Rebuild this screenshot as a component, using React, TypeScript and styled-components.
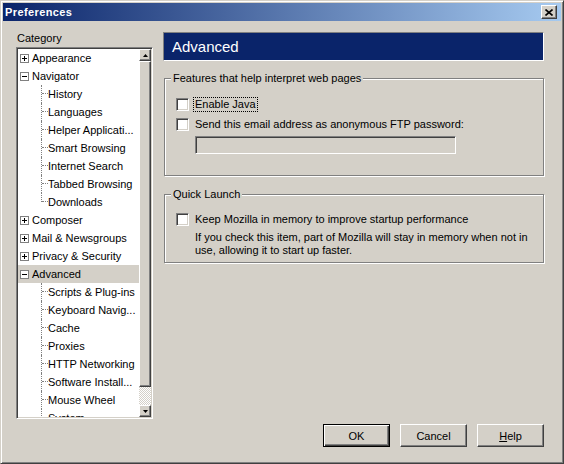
import React from 'react';
import styled, { createGlobalStyle } from 'styled-components';

const face = '#D4D0C8';

const GlobalStyle = createGlobalStyle`
  html, body { margin: 0; padding: 0; background: ${face}; }
  body {
    font-family: "Liberation Sans", Arial, sans-serif;
    font-size: 11px;
    color: #000;
  }
  * { box-sizing: border-box; }
`;

const Window = styled.div`
  width: 564px;
  height: 464px;
  display: flex;
  flex-direction: column;
  background: ${face};
  border: 1px solid;
  border-color: ${face} #404040 #404040 ${face};
  box-shadow: inset 1px 1px 0 #fff, inset -1px -1px 0 #808080;
  padding: 2px;
`;

const TitleBar = styled.div`
  height: 18px;
  display: flex;
  align-items: center;
  justify-content: space-between;
  padding: 0 4px 0 2px;
  background: linear-gradient(to right, #0a246a, #a6caf0);
`;

const Title = styled.span`
  color: #fff;
  font-weight: bold;
  font-size: 11px;
  letter-spacing: 0.4px;
`;

const Raised = `
  background: ${face};
  border: 1px solid;
  border-color: #fff #404040 #404040 #fff;
  box-shadow: inset -1px -1px 0 #808080;
`;

const CloseButton = styled.button`
  ${Raised}
  width: 16px;
  height: 14px;
  padding: 0;
  display: flex;
  align-items: center;
  justify-content: center;
`;

const Content = styled.div`
  display: flex;
  padding: 11px 17px 0 13px;
  gap: 10px;
`;

const LeftColumn = styled.div`
  width: 138px;
  display: flex;
  flex-direction: column;
`;

const Label = styled.div`
  line-height: 13px;
  padding-left: 1px;
  margin-bottom: 2px;
`;

const Sunken = `
  border: 1px solid;
  border-color: #808080 #fff #fff #808080;
  box-shadow: inset 1px 1px 0 #404040, inset -1px -1px 0 ${face};
`;

const TreeBox = styled.div`
  ${Sunken}
  height: 372px;
  padding: 1px;
  background: #fff;
  display: flex;
`;

const TreeList = styled.div`
  flex: 1;
  overflow: hidden;
`;

const Row = styled.div<{ $selected?: boolean }>`
  height: 18px;
  display: flex;
  align-items: center;
  white-space: nowrap;
  background: ${p => (p.$selected ? face : 'transparent')};
`;

const Expander = styled.svg`
  margin: 0 3px 0 2px;
  flex: none;
`;

const Connector = styled.span<{ $last?: boolean }>`
  align-self: flex-start;
  flex: none;
  margin-left: 23px;
  width: 7px;
  height: ${p => (p.$last ? 9 : 18)}px;
  border-left: 1px dotted #808080;
  &::after {
    content: '';
    display: block;
    margin-top: 8px;
    width: 6px;
    border-top: 1px dotted #808080;
  }
`;

const Scrollbar = styled.div`
  width: 12px;
  flex: none;
  display: flex;
  flex-direction: column;
`;

const ScrollButton = styled.div`
  ${Raised}
  height: 12px;
  display: flex;
  align-items: center;
  justify-content: center;
`;

const Thumb = styled.div`
  ${Raised}
  height: 326px;
`;

const Track = styled.div`
  flex: 1;
  background: repeating-conic-gradient(#fff 0 25%, ${face} 0 50%) 0 0 / 2px 2px;
`;

const RightColumn = styled.div`
  flex: 1;
  display: flex;
  flex-direction: column;
`;

const Header = styled.div`
  height: 29px;
  background: #0a246a;
  border: 1px solid;
  border-color: #808080 #fff #fff #808080;
  color: #fff;
  font-size: 15px;
  display: flex;
  align-items: center;
  padding-left: 8px;
`;

const Group = styled.div<{ $gap: number; $bottom: number }>`
  margin: ${p => p.$gap}px 0 0 1px;
  border: 1px solid #808080;
  box-shadow: 1px 1px 0 #fff, inset 1px 1px 0 #fff;
  padding-bottom: ${p => p.$bottom}px;
`;

const Legend = styled.div`
  width: fit-content;
  margin: -7px 0 0 6px;
  padding: 0 2px;
  line-height: 13px;
  background: ${face};
`;

const GroupBody = styled.div<{ $top: number }>`
  padding: ${p => p.$top}px 8px 0 11px;
`;

const CheckRow = styled.div`
  height: 20px;
  display: flex;
  align-items: center;
`;

const Checkbox = styled.span`
  ${Sunken}
  width: 13px;
  height: 13px;
  background: #fff;
  flex: none;
`;

const CheckLabel = styled.span<{ $focused?: boolean }>`
  margin-left: 4px;
  padding: 0 1px;
  line-height: 13px;
  border: 1px dotted ${p => (p.$focused ? '#000' : 'transparent')};
`;

const TextInput = styled.div`
  ${Sunken}
  width: 261px;
  height: 18px;
  margin: 2px 0 0 19px;
  background: ${face};
`;

const Description = styled.p`
  margin: 2px 0 0 19px;
  width: 340px;
  line-height: 13px;
`;

const ButtonRow = styled.div`
  display: flex;
  justify-content: flex-end;
  gap: 10px;
  margin-top: 5px;
  padding-right: 17px;
`;

const Button = styled.button<{ $default?: boolean }>`
  width: 67px;
  height: 23px;
  padding: 0;
  font: inherit;
  color: #000;
  background: ${face};
  border: 1px solid;
  border-color: ${p => (p.$default ? '#000' : '#fff #404040 #404040 #fff')};
  box-shadow: ${p =>
    p.$default
      ? 'inset 1px 1px 0 #fff, inset -1px -1px 0 #404040, inset -2px -2px 0 #808080'
      : 'inset -1px -1px 0 #808080'};
  u { text-decoration: underline; }
`;

const Plus = ({ open }: { open?: boolean }) => (
  <Expander width="9" height="9" viewBox="0 0 9 9">
    <rect x="0.5" y="0.5" width="8" height="8" fill="#fff" stroke="#808080" />
    <path d="M2 4.5h5" stroke="#000" />
    {!open && <path d="M4.5 2v5" stroke="#000" />}
  </Expander>
);

const Arrow = ({ down }: { down?: boolean }) => (
  <svg width="5" height="3" viewBox="0 0 5 3">
    <path d={down ? 'M0 0h5L2.5 3z' : 'M0 3h5L2.5 0z'} fill="#000" />
  </svg>
);

type Item = { label: string; children?: string[]; open?: boolean; selected?: boolean };

const tree: Item[] = [
  { label: 'Appearance' },
  {
    label: 'Navigator',
    open: true,
    children: [
      'History',
      'Languages',
      'Helper Applicati...',
      'Smart Browsing',
      'Internet Search',
      'Tabbed Browsing',
      'Downloads',
    ],
  },
  { label: 'Composer' },
  { label: 'Mail & Newsgroups' },
  { label: 'Privacy & Security' },
  {
    label: 'Advanced',
    open: true,
    selected: true,
    children: [
      'Scripts & Plug-ins',
      'Keyboard Navig...',
      'Cache',
      'Proxies',
      'HTTP Networking',
      'Software Install...',
      'Mouse Wheel',
      'System',
    ],
  },
];

export default function App() {
  return (
    <>
      <GlobalStyle />
      <Window>
        <TitleBar>
          <Title>Preferences</Title>
          <CloseButton>
            <svg width="8" height="7" viewBox="0 0 8 7">
              <path d="M0.5 0.5l7 6M7.5 0.5l-7 6" stroke="#000" strokeWidth="1.6" />
            </svg>
          </CloseButton>
        </TitleBar>
        <Content>
          <LeftColumn>
            <Label>Category</Label>
            <TreeBox>
              <TreeList>
                {tree.map(item => (
                  <React.Fragment key={item.label}>
                    <Row $selected={item.selected}>
                      <Plus open={item.open} />
                      {item.label}
                    </Row>
                    {item.children?.map((child, i, arr) => (
                      <Row key={child}>
                        <Connector $last={i === arr.length - 1} />
                        {child}
                      </Row>
                    ))}
                  </React.Fragment>
                ))}
              </TreeList>
              <Scrollbar>
                <ScrollButton>
                  <Arrow />
                </ScrollButton>
                <Thumb />
                <Track />
                <ScrollButton>
                  <Arrow down />
                </ScrollButton>
              </Scrollbar>
            </TreeBox>
          </LeftColumn>
          <RightColumn>
            <Header>Advanced</Header>
            <Group $gap={17} $bottom={21}>
              <Legend>Features that help interpret web pages</Legend>
              <GroupBody $top={9}>
                <CheckRow>
                  <Checkbox />
                  <CheckLabel $focused>Enable Java</CheckLabel>
                </CheckRow>
                <CheckRow>
                  <Checkbox />
                  <CheckLabel>Send this email address as anonymous FTP password:</CheckLabel>
                </CheckRow>
                <TextInput />
              </GroupBody>
            </Group>
            <Group $gap={18} $bottom={5}>
              <Legend>Quick Launch</Legend>
              <GroupBody $top={8}>
                <CheckRow>
                  <Checkbox />
                  <CheckLabel>Keep Mozilla in memory to improve startup performance</CheckLabel>
                </CheckRow>
                <Description>
                  If you check this item, part of Mozilla will stay in memory when not in use,
                  allowing it to start up faster.
                </Description>
              </GroupBody>
            </Group>
          </RightColumn>
        </Content>
        <ButtonRow>
          <Button $default>OK</Button>
          <Button>Cancel</Button>
          <Button>
            <u>H</u>elp
          </Button>
        </ButtonRow>
      </Window>
    </>
  );
}
